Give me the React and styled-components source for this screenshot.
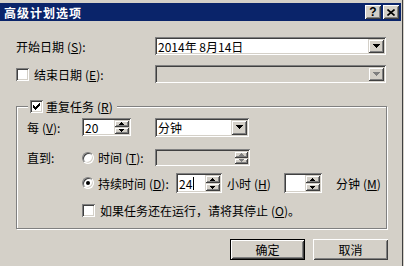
import React from "react";
import styled, { createGlobalStyle, css } from "styled-components";

const FACE = "#d4d0c8";
const SHADOW = "#808080";
const DARK = "#404040";

const GlobalStyle = createGlobalStyle`
  html, body {
    margin: 0;
    padding: 0;
    background: ${FACE};
  }
  body {
    font-family: "Noto Sans CJK SC", "DejaVu Sans", sans-serif;
    font-size: 12px;
    color: #000;
  }
`;

const sunken = css`
  box-shadow: inset 1px 1px ${SHADOW}, inset -1px -1px #fff,
    inset 2px 2px ${DARK}, inset -2px -2px ${FACE};
`;

const raised = css`
  box-shadow: inset 1px 1px ${FACE}, inset -1px -1px ${DARK},
    inset 2px 2px #fff, inset -2px -2px ${SHADOW};
`;

const Window = styled.div`
  width: 404px;
  height: 266px;
  box-sizing: border-box;
  padding: 3px 3px 0 0;
  background: ${FACE};
  box-shadow: inset -1px 0 ${FACE}, inset -2px 0 ${DARK};
  overflow: hidden;
`;

const TitleBar = styled.div`
  height: 18px;
  background: #0a246a;
  display: flex;
  align-items: center;
  padding: 0 2px 0 4px;
  color: #fff;
  font-weight: bold;
`;

const Title = styled.span`
  flex: 1;
  letter-spacing: 1px;
`;

const CaptionButton = styled.div`
  width: 16px;
  height: 14px;
  box-sizing: border-box;
  margin-left: ${(p) => p.$gap || 0}px;
  background: ${FACE};
  box-shadow: inset 1px 1px #fff, inset -1px -1px ${DARK},
    inset 2px 2px ${FACE}, inset -2px -2px ${SHADOW};
  display: flex;
  align-items: center;
  justify-content: center;
  color: #000;
  font-family: "Liberation Sans", sans-serif;
  font-size: 12px;
  font-weight: bold;
  line-height: 1;
`;

const Body = styled.div`
  padding: 16px 0 0 16px;
`;

const Row = styled.div`
  display: flex;
  align-items: center;
  height: ${(p) => p.$h || 18}px;
  margin-top: ${(p) => p.$mt || 0}px;
`;

const Label = styled.span`
  flex: none;
  width: ${(p) => (p.$w ? `${p.$w}px` : "auto")};
  margin-left: ${(p) => p.$ml || 0}px;
  white-space: nowrap;
`;

const KeyWrap = styled.span`
  margin-left: 3px;
`;

const U = styled.span`
  text-decoration: underline;
`;

const Key = ({ k }) => (
  <KeyWrap>
    (<U>{k}</U>)
  </KeyWrap>
);

const Spacer = styled.span`
  flex: none;
  width: ${(p) => p.$w}px;
`;

const Box = styled.div`
  ${sunken}
  flex: none;
  box-sizing: border-box;
  width: ${(p) => p.$w}px;
  height: ${(p) => p.$h || 18}px;
  padding: 2px;
  display: flex;
  background: ${(p) => (p.$disabled ? FACE : "#fff")};
`;

const BoxText = styled.span`
  flex: 1;
  display: flex;
  align-items: center;
  padding-left: 1px;
  white-space: nowrap;
  overflow: hidden;
`;

const Caret = styled.span`
  width: 1px;
  height: 13px;
  background: #000;
  margin-left: 1px;
`;

const DropButton = styled.div`
  ${raised}
  flex: none;
  width: 16px;
  background: ${FACE};
  display: flex;
  align-items: center;
  justify-content: center;
`;

const UpDown = styled.div`
  flex: none;
  width: ${(p) => p.$w || 15}px;
  display: flex;
  flex-direction: column;
`;

const SpinButton = styled.div`
  ${raised}
  flex: 1;
  background: ${FACE};
  display: flex;
  align-items: center;
  justify-content: center;
`;

const Check = styled.div`
  ${sunken}
  flex: none;
  width: 13px;
  height: 13px;
  box-sizing: border-box;
  margin-right: ${(p) => p.$mr || 5}px;
  background: #fff;
  display: flex;
  align-items: center;
  justify-content: center;
`;

const Radio = styled.div`
  flex: none;
  width: 12px;
  height: 12px;
  box-sizing: border-box;
  border-radius: 50%;
  border: 1px solid;
  border-color: ${SHADOW} #fff #fff ${SHADOW};
  box-shadow: inset 1px 1px ${DARK}, inset -1px -1px ${FACE};
  background: #fff;
  margin-right: 4px;
  display: flex;
  align-items: center;
  justify-content: center;
`;

const Dot = styled.span`
  width: 4px;
  height: 4px;
  border-radius: 50%;
  background: #000;
`;

const Group = styled.div`
  position: relative;
  box-sizing: border-box;
  width: 371px;
  height: 123px;
  margin-top: 23px;
  border: 1px solid ${SHADOW};
  box-shadow: inset 1px 1px #fff, 1px 1px #fff;
  padding: 11px 0 0 10px;
`;

const Legend = styled.div`
  position: absolute;
  top: -7px;
  left: 11px;
  height: 13px;
  padding: 0 4px 0 2px;
  background: ${FACE};
  display: flex;
  align-items: center;
`;

const ButtonRow = styled.div`
  display: flex;
  justify-content: flex-end;
  gap: 8px;
  margin-top: 10px;
  padding-right: 13px;
`;

const PushButton = styled.div`
  box-sizing: border-box;
  width: 75px;
  height: 21px;
  background: ${FACE};
  display: flex;
  align-items: center;
  justify-content: center;
  ${(p) =>
    p.$default
      ? css`
          box-shadow: inset 0 0 0 1px #000, inset 2px 2px #fff,
            inset -2px -2px ${DARK}, inset 3px 3px ${FACE},
            inset -3px -3px ${SHADOW};
        `
      : css`
          box-shadow: inset 1px 1px #fff, inset -1px -1px ${DARK},
            inset 2px 2px ${FACE}, inset -2px -2px ${SHADOW};
        `}
`;

const DownArrow = ({ color = "#000" }) => (
  <svg width="7" height="4" viewBox="0 0 7 4" shapeRendering="crispEdges">
    <path d="M0 0h7v1h-1v1h-1v1h-1v1h-1v-1h-1v-1h-1v-1h-1z" fill={color} />
  </svg>
);

const SmallArrow = ({ up, color = "#000" }) => (
  <svg width="5" height="3" viewBox="0 0 5 3" shapeRendering="crispEdges">
    <path
      d={up ? "M2 0h1v1h1v1h1v1h-5v-1h1v-1h1z" : "M0 0h5v1h-1v1h-1v1h-1v-1h-1v-1h-1z"}
      fill={color}
    />
  </svg>
);

const CheckMark = () => (
  <svg width="7" height="7" viewBox="0 0 7 7" shapeRendering="crispEdges">
    <path d="M6 0h1v3h-1v1h-1v1h-1v1h-1v1h-1v-1h-1v-1h-1v-3h1v1h1v1h1v-1h1v-1h1z" fill="#000" />
  </svg>
);

const Combo = ({ w, h, disabled, children }) => (
  <Box $w={w} $h={h} $disabled={disabled}>
    <BoxText>{children}</BoxText>
    <DropButton>
      <DownArrow color={disabled ? SHADOW : "#000"} />
    </DropButton>
  </Box>
);

const Spinner = ({ w, h, children }) => (
  <Box $w={w} $h={h}>
    <BoxText>{children}</BoxText>
    <UpDown>
      <SpinButton>
        <SmallArrow up />
      </SpinButton>
      <SpinButton>
        <SmallArrow />
      </SpinButton>
    </UpDown>
  </Box>
);

const TimePicker = () => (
  <Box $w={95} $h={17} $disabled>
    <BoxText />
    <UpDown $w={14}>
      <SpinButton>
        <SmallArrow up color={SHADOW} />
      </SpinButton>
      <SpinButton>
        <SmallArrow color={SHADOW} />
      </SpinButton>
    </UpDown>
  </Box>
);

export default function App() {
  return (
    <>
      <GlobalStyle />
      <Window>
        <TitleBar>
          <Title>高级计划选项</Title>
          <CaptionButton>?</CaptionButton>
          <CaptionButton $gap={2}>
            <svg width="8" height="7" viewBox="0 0 8 7">
              <path d="M0.5 0.5L7.5 6.5M7.5 0.5L0.5 6.5" stroke="#000" strokeWidth="1.6" />
            </svg>
          </CaptionButton>
        </TitleBar>
        <Body>
          <Row>
            <Label $w={139}>
              开始日期<Key k="S" />:
            </Label>
            <Combo w={231}>2014年 8月14日</Combo>
          </Row>
          <Row $mt={10}>
            <Check />
            <Label $w={121}>
              结束日期<Key k="E" />:
            </Label>
            <Combo w={231} disabled />
          </Row>
          <Group>
            <Legend>
              <Check $mr={3}>
                <CheckMark />
              </Check>
              <Label>
                重复任务<Key k="R" />
              </Label>
            </Legend>
            <Row>
              <Label $w={55}>
                每<Key k="V" />:
              </Label>
              <Spinner w={49}>20</Spinner>
              <Spacer $w={24} />
              <Combo w={94} h={19}>
                分钟
              </Combo>
            </Row>
            <Row $mt={13} $h={17}>
              <Label $w={55}>直到:</Label>
              <Radio />
              <Label $w={57}>
                时间<Key k="T" />:
              </Label>
              <TimePicker />
            </Row>
            <Row $mt={7} $h={20}>
              <Spacer $w={55} />
              <Radio>
                <Dot />
              </Radio>
              <Label $w={78}>
                持续时间<Key k="D" />:
              </Label>
              <Spinner w={46} h={20}>
                24
                <Caret />
              </Spinner>
              <Label $w={57} $ml={5}>
                小时<Key k="H" />
              </Label>
              <Spinner w={38} h={20} />
              <Label $ml={14}>
                分钟<Key k="M" />
              </Label>
            </Row>
            <Row $mt={11} $h={13}>
              <Spacer $w={55} />
              <Check />
              <Label>
                如果任务还在运行，请将其停止<Key k="O" />。
              </Label>
            </Row>
          </Group>
          <ButtonRow>
            <PushButton $default>确定</PushButton>
            <PushButton>取消</PushButton>
          </ButtonRow>
        </Body>
      </Window>
    </>
  );
}
